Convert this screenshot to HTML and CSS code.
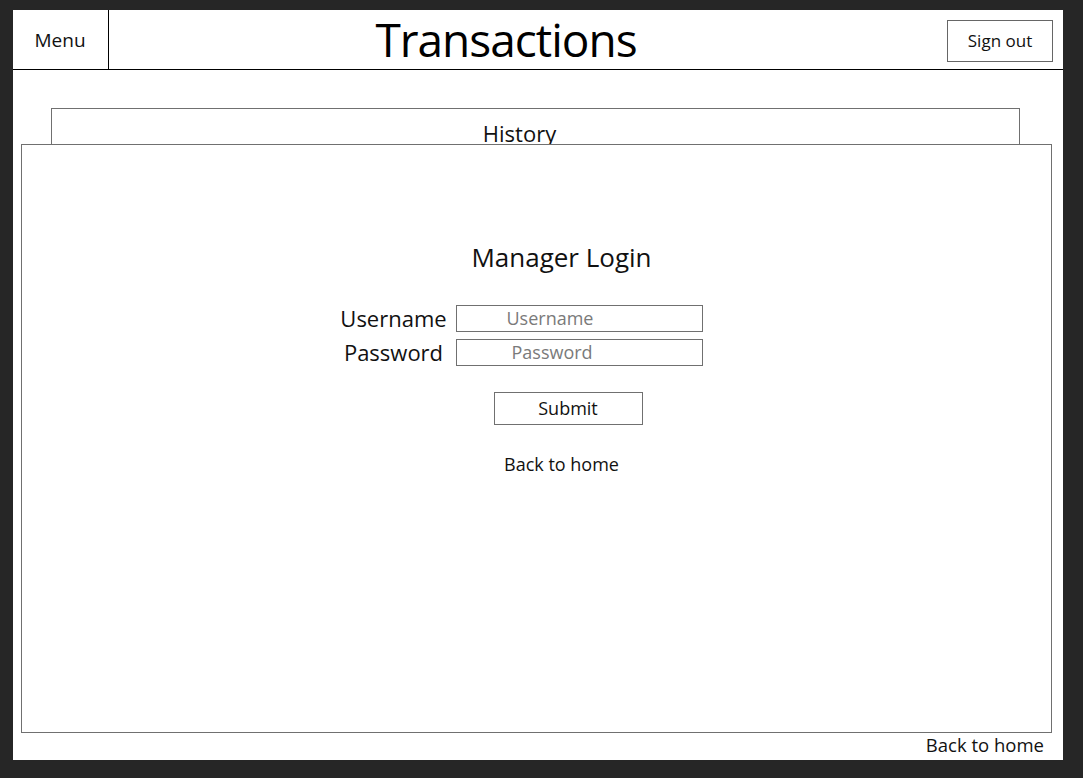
FILE: index.html
```html
<!DOCTYPE html>
<html lang="en">
<head>
<meta charset="utf-8">
<title>Transactions</title>
<link rel="stylesheet" href="styles.css">
</head>
<body>
<div class="page">
  <header class="header">
    <div class="menu">Menu</div>
    <h1 class="title">Transactions</h1>
    <div class="signout-cell"><button class="signout">Sign out</button></div>
  </header>
  <main class="content">
    <section class="history">
      <h2 class="history-title">History</h2>
    </section>
    <div class="modal">
      <div class="modal-inner">
        <h2 class="login-title">Manager Login</h2>
        <form class="login-form">
          <label class="field-label" for="u">Username</label>
          <input class="field-input" id="u" type="text" placeholder="Username">
          <label class="field-label" for="p">Password</label>
          <input class="field-input pw" id="p" type="password" placeholder="Password">
        </form>
        <button class="submit">Submit</button>
        <a class="back-link">Back to home</a>
      </div>
    </div>
  </main>
  <footer class="footer"><a class="back-link">Back to home</a></footer>
</div>
</body>
</html>
```

FILE: styles.css
```css
* { box-sizing: border-box; }
html, body { margin: 0; padding: 0; }
body {
  background: #262626;
  font-family: "Open Sans", "Noto Sans", sans-serif;
  color: #111;
  width: 1083px;
  height: 778px;
  overflow: hidden;
}
.page {
  margin: 10px 0 0 13px;
  width: 1050px;
  height: 750px;
  background: #fff;
  position: relative;
  display: flex;
  flex-direction: column;
}
.header {
  display: flex;
  height: 60px;
  border-bottom: 1px solid #000;
  flex: none;
}
.menu {
  width: 96px;
  border-right: 1px solid #000;
  display: flex;
  align-items: center;
  justify-content: center;
  font-size: 19px;
  padding-right: 1px;
}
.title {
  flex: 1;
  margin: 0;
  text-align: center;
  font-weight: 400;
  font-size: 46px;
  letter-spacing: -1px;
  line-height: 58px;
  color: #000;
}
.signout-cell {
  width: 160px;
  display: flex;
  justify-content: flex-end;
  align-items: flex-start;
  padding: 10px 10px 0 0;
}
.signout {
  width: 106px;
  height: 42px;
  border: 1px solid #666;
  background: #fff;
  font-family: inherit;
  font-size: 17px;
  color: #111;
  padding: 0 0 2px;
}
.content {
  flex: 1;
  position: relative;
  padding: 38px 43px 0 38px;
}
.history {
  height: 200px;
  border: 1px solid #707070;
  border-bottom: none;
}
.history-title {
  margin: 0;
  text-align: center;
  font-weight: 400;
  font-size: 22px;
  line-height: 30px;
  padding: 9px 32px 0 0;
}
.modal {
  position: absolute;
  left: 8px;
  top: 74px;
  width: 1031px;
  height: 589px;
  border: 1px solid #707070;
  background: #fff;
}
.modal-inner {
  display: flex;
  flex-direction: column;
  align-items: center;
  padding: 94px 0 0 50px;
}
.login-title {
  margin: 0;
  font-weight: 400;
  font-size: 26px;
  line-height: 36px;
}
.login-form {
  display: grid;
  grid-template-columns: 110px 247px;
  column-gap: 7px;
  row-gap: 7px;
  margin: 30px 82px 0 0;
  align-items: center;
}
.field-label {
  text-align: center;
  font-size: 22px;
  line-height: 27px;
}
.field-input {
  width: 247px;
  height: 27px;
  border: 1px solid #707070;
  padding: 0 0 2px 50px;
  font-family: inherit;
  font-size: 18px;
  color: #333;
  outline: none;
}
.field-input.pw { padding-left: 55px; }
.field-input::placeholder { color: #7a7a7a; }
.submit {
  margin: 26px 0 0 13px;
  width: 149px;
  height: 33px;
  border: 1px solid #707070;
  background: #fff;
  font-family: inherit;
  font-size: 18px;
  color: #111;
  padding: 0 0 2px;
}
.back-link {
  font-size: 18px;
  line-height: 26px;
  color: #111;
  margin-top: 26px;
  cursor: pointer;
}
.footer {
  flex: none;
  display: flex;
  justify-content: flex-end;
  padding: 0 19px 2px 0;
}
.footer .back-link { margin-top: 0; font-size: 18.5px; }
```
